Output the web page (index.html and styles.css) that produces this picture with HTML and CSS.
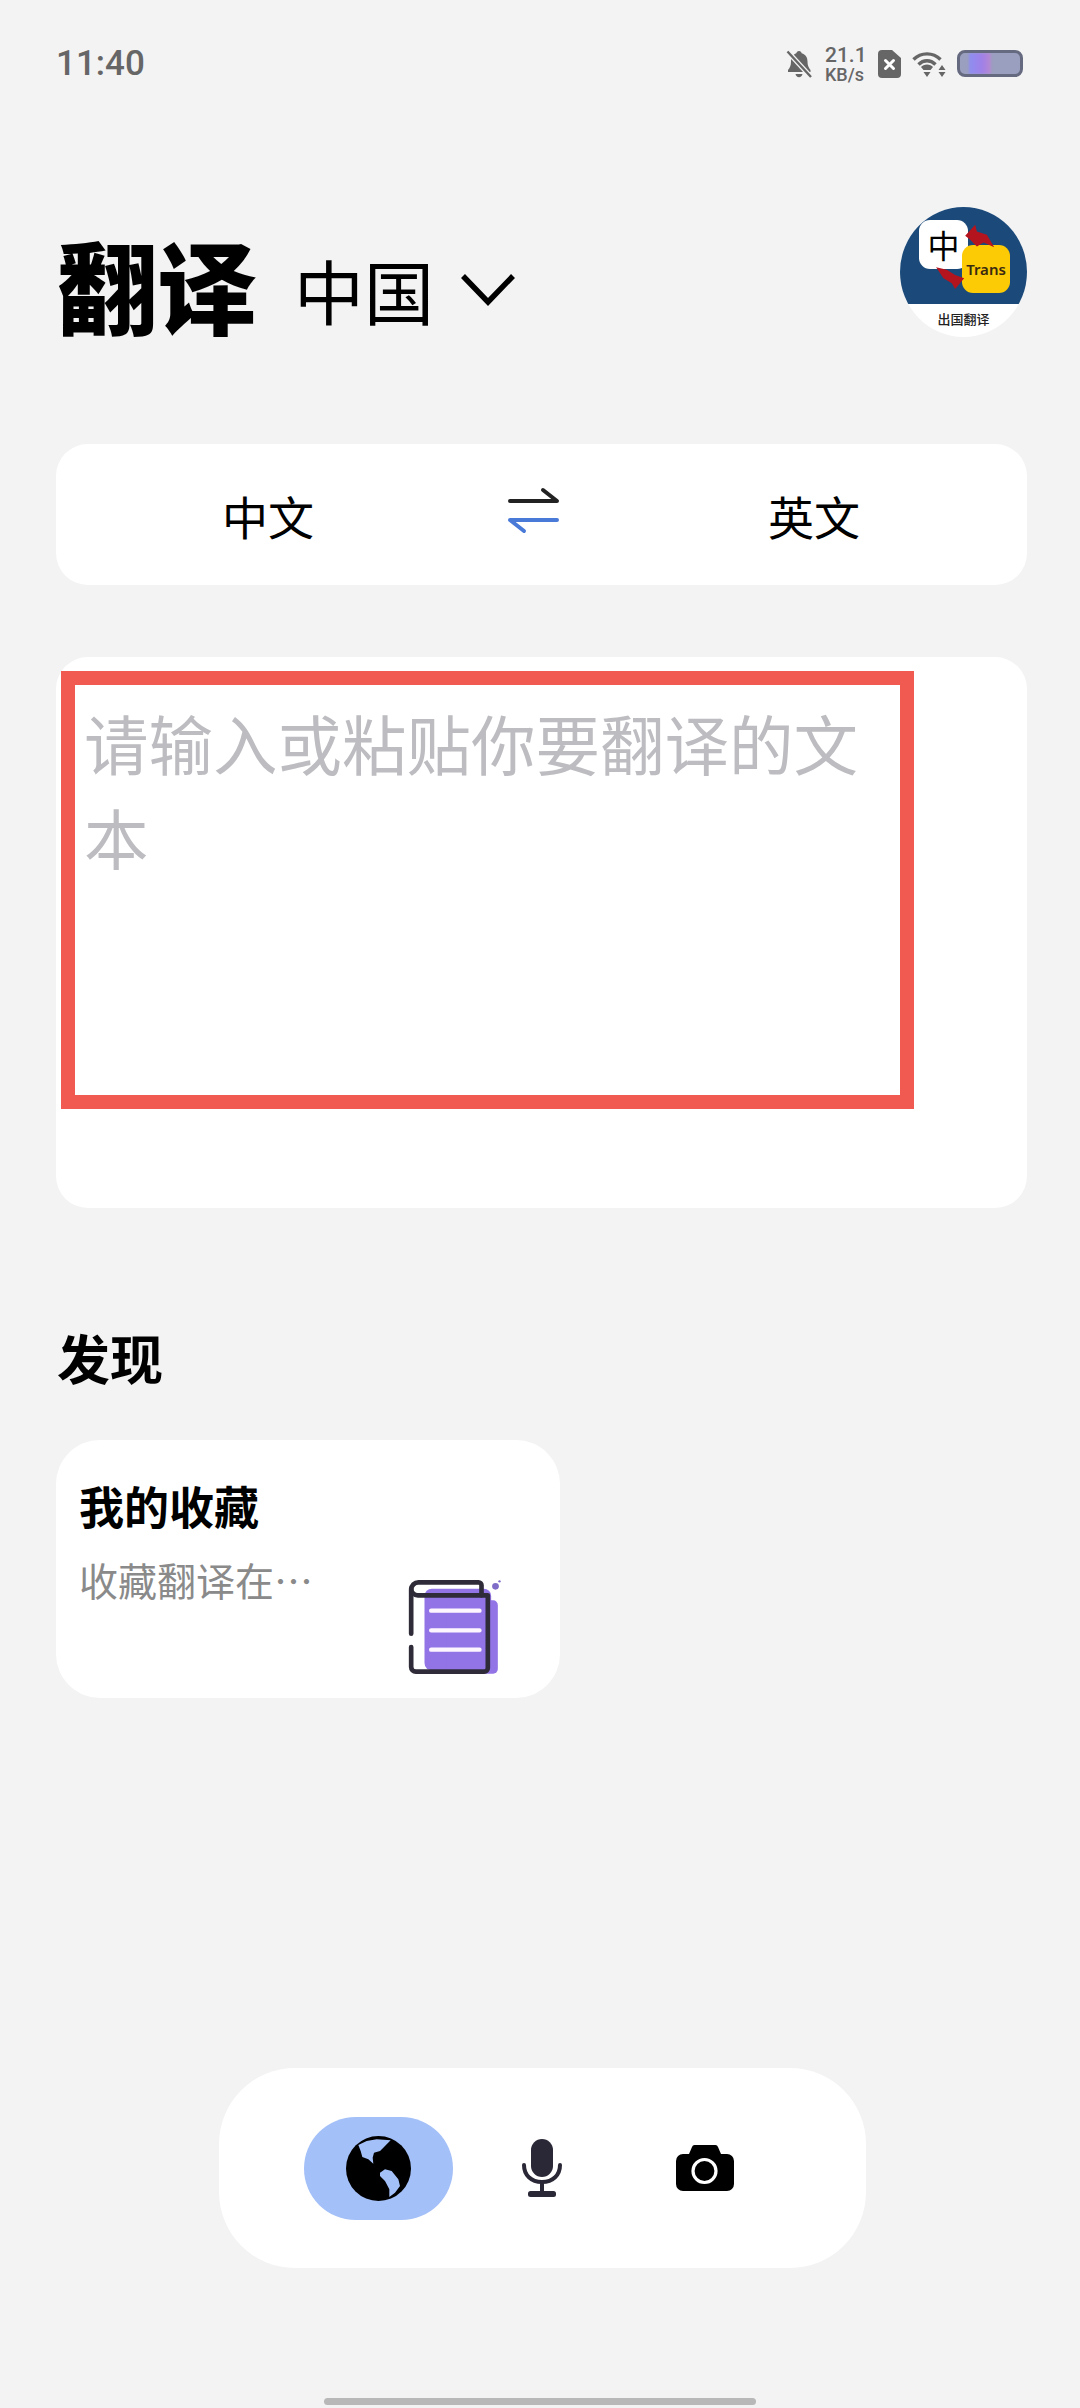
FILE: index.html
```html
<!DOCTYPE html>
<html lang="zh-CN">
<head>
<meta charset="utf-8">
<title>翻译</title>
<link rel="stylesheet" href="styles.css">
</head>
<body>
<div class="page">
  <header class="status">
    <span class="time">11:40</span>
    <div class="status-icons">
      <svg class="ic-bell" width="26" height="28" viewBox="0 0 26 28"><path d="M13 1c1.500 0 2.500 1 2.700 2.300 3.800 1 5.800 4.200 5.800 8.200 0 4 1 6 3 8.500v2H2v-2c2-2.500 3-4.500 3-8.500 0-4 2-7.200 5.300-8.200C10.500 2 11.500 1 13 1zM9.500 24h7c-.3 2-1.700 3.200-3.500 3.200S9.800 26 9.500 24z" fill="#666"/><path d="M1.500 1.500L25 27" stroke="#f3f3f4" stroke-width="5"/><path d="M1.500 1.500L25 27" stroke="#666" stroke-width="2.400"/></svg>
      <div class="speed"><span class="speed-num">21.1</span><span class="speed-unit">KB/s</span></div>
      <svg class="ic-sim" width="23" height="28" viewBox="0 0 23 28"><path d="M4 0h10l9 8v16a4 4 0 0 1-4 4H4a4 4 0 0 1-4-4V4a4 4 0 0 1 4-4z" fill="#666"/><path d="M7.500 10.500l8 8m0-8l-8 8" stroke="#fff" stroke-width="3" stroke-linecap="round"/></svg>
      <svg class="ic-wifi" width="34" height="28" viewBox="0 0 34 28"><g fill="none" stroke="#666" stroke-width="3.400"><path d="M1.500 9.500C9 2 21 2 28.500 9.500"/><path d="M6.500 14.500c5-5 12-5 17 0"/></g><path d="M15 14.500c2.500 0 4.800 1 6 2.500L18.500 20h-7L9 17c1.200-1.500 3.500-2.500 6-2.500zM11.500 22h7L15 27z" fill="#666"/><path d="M30 15l3.500 5h-7zM30 27l-3.500-5h7z" fill="#666"/></svg>
      <div class="battery"><span class="battery-glow"></span></div>
    </div>
  </header>

  <section class="title-row">
    <h1 class="title">翻译</h1>
    <span class="region">中国</span>
    <svg class="chevron" width="56" height="34" viewBox="0 0 56 34"><path d="M3 4l25 26L53 4" fill="none" stroke="#000" stroke-width="5.500"/></svg>
    <div class="avatar">
      <div class="avatar-top">
        <span class="tile-zh">中</span>
        <span class="tile-en">Trans</span>
        <svg class="avatar-arrows" width="127" height="97" viewBox="60 52 380 290"><path d="M255 138L285 105 290 125 320 135 342 172 310 158 290 170 270 150z" fill="#b3141e"/><path d="M168 232L200 240 225 255 252 265 225 297 215 280 190 265z" fill="#b3141e"/></svg>
      </div>
      <span class="avatar-label">出国翻译</span>
    </div>
  </section>

  <section class="lang-card">
    <span class="lang">中文</span>
    <svg class="swap" width="54" height="48" viewBox="0 0 54 48"><path d="M4 15h47L37 4" fill="none" stroke="#222" stroke-width="4" stroke-linecap="round" stroke-linejoin="round"/><path d="M51 34H4l14 11" fill="none" stroke="#4a7ad8" stroke-width="4" stroke-linecap="round" stroke-linejoin="round"/></svg>
    <span class="lang lang-right">英文</span>
  </section>

  <section class="input-card">
    <div class="input-mark">请输入或粘贴你要翻译的文本</div>
  </section>

  <h2 class="discover">发现</h2>

  <section class="fav-card">
    <div class="fav-text">
      <div class="fav-title">我的收藏</div>
      <div class="fav-sub">收藏翻译在…</div>
    </div>
    <svg class="book" width="97" height="100" viewBox="80 80 290 300">
      <rect x="135" y="115" width="200" height="245" rx="22" fill="#9274e6"/>
      <rect x="200" y="150" width="155" height="220" rx="14" fill="#9274e6"/>
      <g fill="none" stroke="#2f2b38" stroke-width="14" stroke-linecap="round" stroke-linejoin="round">
        <path d="M95 250V118a22 22 0 0 1 22-22h180a9 9 0 0 1 9 9v30"/>
        <path d="M95 290v60a14 14 0 0 0 14 14h205a11 11 0 0 0 11-11V135H115a20 20 0 0 1-20-20"/>
      </g>
      <g stroke="#fdf6ff" stroke-width="13" stroke-linecap="round"><path d="M155 181h145M155 240h145M155 298h145"/></g>
      <circle cx="348" cy="108" r="10" fill="#7f6bc8"/><circle cx="360" cy="93" r="3.500" fill="#7f6bc8"/>
    </svg>
  </section>

  <div class="spacer"></div>

  <nav class="nav">
    <div class="nav-slot"><div class="pill">
      <svg width="65" height="65" viewBox="48 45 195 195"><circle cx="145.500" cy="142.500" r="97.500" fill="#000"/><path d="M85 72L110 60 140 55 182 58 165 75 150 90 132 95 128 110 130 128 115 115 97 108 92 90z" fill="#a4c0f8"/><path d="M150 155L165 145 185 150 205 175 210 195 195 215 178 228 178 205 165 180 150 165z" fill="#a4c0f8"/></svg>
    </div></div>
    <div class="nav-slot">
      <svg width="40" height="58" viewBox="0 0 40 58"><rect x="9" y="0" width="22" height="38" rx="11" fill="#2a2836"/><path d="M2 26c0 10 7 17 18 17s18-7 18-17" fill="none" stroke="#2a2836" stroke-width="4" stroke-linecap="round"/><path d="M20 43v10" stroke="#2a2836" stroke-width="4"/><rect x="6" y="52" width="28" height="6" rx="2.500" fill="#2a2836"/></svg>
    </div>
    <div class="nav-slot">
      <svg width="58" height="46" viewBox="0 0 58 46"><path d="M19 0h20a3 3 0 0 1 3 2l3 7h6a7 7 0 0 1 7 7v23a7 7 0 0 1-7 7H7a7 7 0 0 1-7-7V16a7 7 0 0 1 7-7h6l3-7a3 3 0 0 1 3-2z" fill="#000"/><circle cx="28.500" cy="26" r="11.500" fill="none" stroke="#fff" stroke-width="3.200"/></svg>
    </div>
  </nav>

  <div class="home-bar"></div>
</div>
</body>
</html>
```
FILE: styles.css
```css
* { box-sizing: border-box; margin: 0; padding: 0; }
html, body { width: 1080px; height: 2408px; overflow: hidden; background: #f3f3f4; }
body { font-family: "Noto Sans CJK SC", "Noto Sans", sans-serif; color: #000; }
.page { width: 1080px; height: 2408px; display: flex; flex-direction: column; padding: 0 53px 3px 56px; }

.status { height: 127px; flex: none; display: flex; justify-content: space-between; align-items: center; }
.time { font-family: Roboto, sans-serif; font-weight: 500; font-size: 35px; color: #666; }
.status-icons { display: flex; align-items: center; margin-right: 4px; }
.ic-bell { margin-right: 13px; }
.speed { display: flex; flex-direction: column; align-items: flex-start; width: 40px; margin-top: 2px; font-family: Roboto, sans-serif; color: #666; font-weight: 500; margin-right: 13px; }
.speed-num { font-size: 21px; line-height: 21px; }
.speed-unit { font-size: 18px; line-height: 18px; }
.ic-sim { margin-right: 11px; }
.ic-wifi { margin-right: 11px; }
.battery { width: 66px; height: 27px; border: 3px solid #666a80; border-radius: 8px; background: #9a9fbf; overflow: hidden; }
.battery-glow { display: block; width: 22px; height: 100%; margin-left: 9px; background: linear-gradient(90deg, #8d8ff0, #a080e8 60%, #b68ad0); filter: blur(1px); }

.title-row { flex: none; height: 317px; display: flex; align-items: flex-start; padding-top: 92px; position: relative; }
.title { font-size: 100px; font-weight: 900; line-height: 130px; margin-left: 1px; }
.region { font-size: 70px; font-weight: 400; line-height: 96px; margin-left: 37px; margin-top: 23px; }
.chevron { margin-left: 26px; margin-top: 53px; }
.avatar { width: 127px; height: 130px; border-radius: 50%; overflow: hidden; background: #fff; position: absolute; right: 0; top: 80px; }
.avatar-top { height: 97px; background: #1b4a7a; position: relative; }
.tile-zh { position: absolute; left: 19px; top: 13px; width: 49px; height: 49px; background: #fff; border-radius: 11px; font-size: 32px; line-height: 49px; text-align: center; }
.tile-en { position: absolute; left: 62px; top: 38px; width: 48px; height: 48px; background: #fccb05; border-radius: 11px; font-family: "Noto Sans", sans-serif; font-size: 15px; font-weight: 600; line-height: 48px; text-align: center; color: #3a2a10; }
.avatar-arrows { position: absolute; left: 0; top: 0; }
.avatar-label { display: block; text-align: center; font-size: 13px; font-weight: 500; line-height: 30px; color: #222; }

.lang-card { flex: none; height: 141px; background: #fff; border-radius: 32px; display: flex; align-items: center; padding-left: 166px; }
.lang { font-size: 46px; line-height: 60px; }
.swap { margin-left: 192px; margin-top: -10px; }
.lang-right { margin-left: 208px; }

.input-card { flex: none; height: 551px; margin-top: 72px; background: #fff; border-radius: 32px; padding: 14px 0 0 5px; }
.input-mark { width: 853px; height: 438px; border: 14px solid #f05a50; padding: 10px 0 0 9px; font-size: 64.5px; line-height: 94px; color: #bdbcc0; }

.discover { flex: none; font-size: 53px; font-weight: 700; line-height: 70px; margin-top: 114px; margin-left: 1px; }

.fav-card { flex: none; width: 504px; height: 258px; margin-top: 48px; background: #fff; border-radius: 44px; display: flex; justify-content: space-between; padding: 35px 57px 21px 23px; }
.fav-title { font-size: 45px; font-weight: 700; line-height: 62px; }
.fav-sub { font-size: 39px; line-height: 54px; color: #8a8a8a; margin-top: 15px; }
.book { align-self: flex-end; flex: none; margin-left: -60px; }

.spacer { flex: 1; }

.nav { flex: none; width: 647px; height: 200px; margin-left: 163px; margin-bottom: 130px; background: #fff; border-radius: 76px; display: flex; align-items: center; padding: 0 0 0 78px; }
.nav-slot { width: 163px; height: 103px; display: flex; align-items: center; justify-content: center; }
.pill { width: 149px; height: 103px; border-radius: 52px; background: #a4c0f8; display: flex; align-items: center; justify-content: center; }

.home-bar { flex: none; width: 432px; height: 7px; border-radius: 4px; background: #b8b8b8; margin-left: 268px; }
```
